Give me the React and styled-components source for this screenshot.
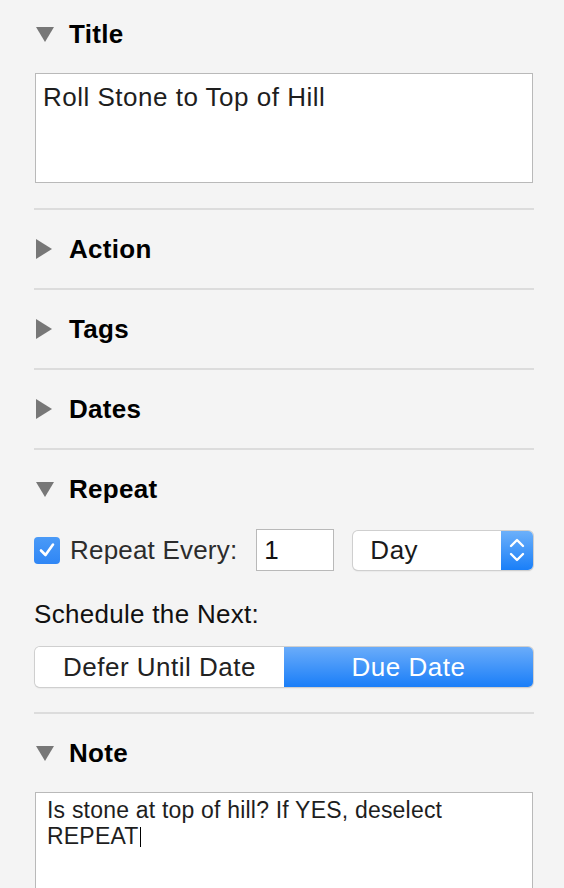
import React from 'react'
import styled, { createGlobalStyle } from 'styled-components'

const SansFont = `"Liberation Sans", Arial, sans-serif`

const GlobalStyle = createGlobalStyle`
  html, body {
    margin: 0;
    padding: 0;
    background: #f4f4f4;
  }
  body {
    font-family: ${SansFont};
    -webkit-font-smoothing: antialiased;
  }
`

const Inspector = styled.div`
  width: 500px;
  padding: 0 30px 0 34px;
  height: 888px;
  overflow: hidden;
  background: #f4f4f4;
`

const Section = styled.section`
  padding: ${props => (props.first ? '14px' : '19px')} 0 ${props => (props.open ? '25px' : '19px')};
  border-bottom: ${props => (props.last ? 'none' : '2px solid #dcdcdc')};
`

const Header = styled.div`
  display: flex;
  align-items: center;
  height: 40px;
  padding-left: 2px;
`

const Toggle = styled.span`
  display: flex;
  align-items: center;
  width: 33px;
  height: 40px;
`

const HeaderLabel = styled.h3`
  margin: 0;
  font-family: ${SansFont};
  font-size: 26px;
  font-weight: 700;
  letter-spacing: 0.3px;
  color: #000;
  line-height: 30px;
`

const TextBox = styled.div`
  margin: 19px 1px 0;
  height: ${props => props.h}px;
  box-sizing: border-box;
  background: #fff;
  border: 1px solid #b9b9b9;
  padding: ${props => (props.small ? '4px 11px' : '8px 7px')};
  font-size: ${props => (props.small ? '23px' : '26px')};
  line-height: ${props => (props.small ? '26px' : '30px')};
  letter-spacing: ${props => (props.small ? '0.2px' : '0.5px')};
  color: #1e1e1e;
`

const Caret = styled.span`
  display: inline-block;
  width: 1.5px;
  height: 20px;
  background: #000;
  vertical-align: -3px;
  margin-left: 1px;
`

const RepeatRow = styled.div`
  display: flex;
  align-items: center;
  margin-top: 20px;
  height: 42px;
`

const Checkbox = styled.span`
  display: flex;
  align-items: center;
  justify-content: center;
  width: 26px;
  height: 27px;
  border-radius: 4px;
  background: linear-gradient(#4a9af7, #2f86f5);
  margin-right: 10px;
`

const FieldLabel = styled.span`
  font-size: 26px;
  letter-spacing: 0.2px;
  color: #2c2c2c;
  margin-right: 19px;
`

const NumberField = styled.div`
  width: 78px;
  height: 42px;
  box-sizing: border-box;
  border: 1px solid #b9b9b9;
  background: #fff;
  padding-left: 7px;
  font-size: 26px;
  line-height: 40px;
  color: #111;
  margin-right: 19px;
`

const Select = styled.div`
  display: flex;
  width: 180px;
  height: 39px;
  box-sizing: border-box;
  border-radius: 5px;
  background: #fff;
  box-shadow: 0 0 0 1px #cfcfcf, 0 1px 1.5px rgba(0, 0, 0, 0.2);
  overflow: hidden;
`

const SelectValue = styled.span`
  flex: 1;
  padding-left: 17px;
  font-size: 26px;
  letter-spacing: 0.5px;
  line-height: 39px;
  color: #1a1a1a;
`

const SelectArrows = styled.span`
  display: flex;
  align-items: center;
  justify-content: center;
  width: 32px;
  background: linear-gradient(#6cb0fa, #1a7ff8);
`

const ScheduleLabel = styled.div`
  margin-top: 28px;
  font-size: 26px;
  letter-spacing: 0.3px;
  line-height: 30px;
  color: #111;
`

const Segmented = styled.div`
  display: grid;
  grid-template-columns: 1fr 1fr;
  margin: 18px 1px 0;
  height: 40px;
  border-radius: 5px;
  overflow: hidden;
  box-shadow: 0 0 0 1px #cfcfcf, 0 1px 1.5px rgba(0, 0, 0, 0.2);
`

const Segment = styled.div`
  display: flex;
  align-items: center;
  justify-content: center;
  font-size: 26px;
  letter-spacing: 0.5px;
  color: ${props => (props.active ? '#fff' : '#222')};
  background: ${props => (props.active ? 'linear-gradient(#6aacfa, #1a7ef8)' : '#fff')};
`

const DownTriangle = () => (
  <svg width="18" height="15" viewBox="0 0 18 15">
    <polygon points="0,0 18,0 9,15" fill="#777" />
  </svg>
)

const RightTriangle = () => (
  <svg width="16" height="20" viewBox="0 0 16 20">
    <polygon points="0,0 16,10 0,20" fill="#777" />
  </svg>
)

const SectionHeader = ({ label, open }) => (
  <Header>
    <Toggle>{open ? <DownTriangle /> : <RightTriangle />}</Toggle>
    <HeaderLabel>{label}</HeaderLabel>
  </Header>
)

const App = () => (
  <>
    <GlobalStyle />
    <Inspector>
      <Section first open>
        <SectionHeader label="Title" open />
        <TextBox h={110}>Roll Stone to Top of Hill</TextBox>
      </Section>
      <Section>
        <SectionHeader label="Action" />
      </Section>
      <Section>
        <SectionHeader label="Tags" />
      </Section>
      <Section>
        <SectionHeader label="Dates" />
      </Section>
      <Section open>
        <SectionHeader label="Repeat" open />
        <RepeatRow>
          <Checkbox>
            <svg width="18" height="18" viewBox="0 0 18 18">
              <path d="M3 9.5 L7.5 14 L15 3.5" fill="none" stroke="#fff" strokeWidth="2.6" strokeLinecap="round" strokeLinejoin="round" />
            </svg>
          </Checkbox>
          <FieldLabel>Repeat Every:</FieldLabel>
          <NumberField>1</NumberField>
          <Select>
            <SelectValue>Day</SelectValue>
            <SelectArrows>
              <svg width="16" height="28" viewBox="0 0 16 28">
                <path d="M2 10 L8 4 L14 10 M2 18 L8 24 L14 18" fill="none" stroke="#fff" strokeWidth="2.4" strokeLinecap="round" strokeLinejoin="round" />
              </svg>
            </SelectArrows>
          </Select>
        </RepeatRow>
        <ScheduleLabel>Schedule the Next:</ScheduleLabel>
        <Segmented>
          <Segment>Defer Until Date</Segment>
          <Segment active>Due Date</Segment>
        </Segmented>
      </Section>
      <Section open last>
        <SectionHeader label="Note" open />
        <TextBox h={140} small>
          Is stone at top of hill? If YES, deselect
          <br />
          REPEAT<Caret />
        </TextBox>
      </Section>
    </Inspector>
  </>
)

export default App
